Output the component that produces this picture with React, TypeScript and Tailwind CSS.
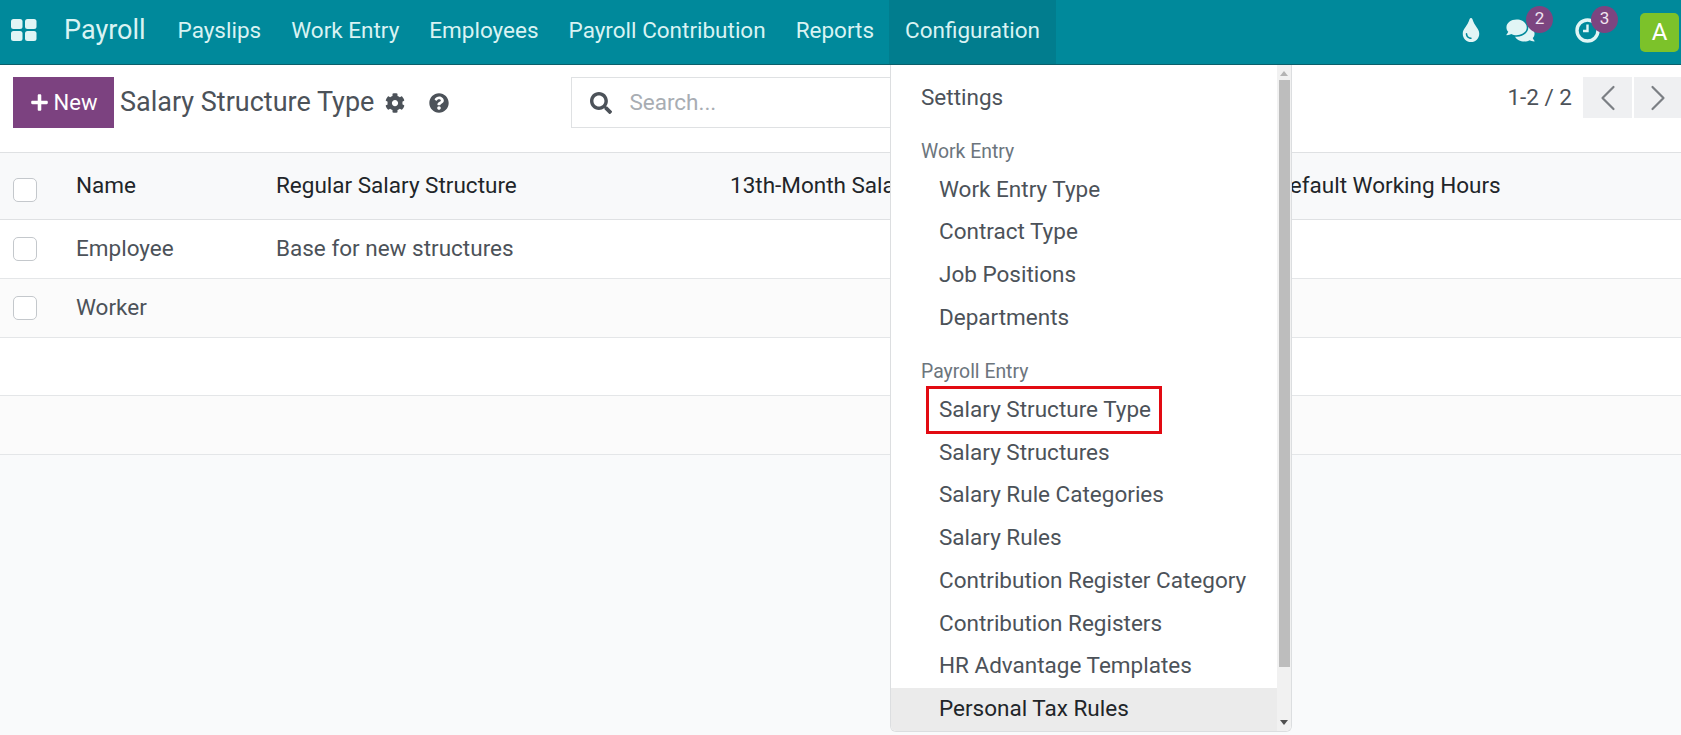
import { ChevronLeft, ChevronRight } from "lucide-react";
import { FaCog, FaComments, FaPlus, FaQuestionCircle, FaSearch, FaTint } from "react-icons/fa";

const navItems = ["Payslips", "Work Entry", "Employees", "Payroll Contribution", "Reports"];

const workEntryItems = ["Work Entry Type", "Contract Type", "Job Positions", "Departments"];

const payrollEntryItems = [
  "Salary Structure Type",
  "Salary Structures",
  "Salary Rule Categories",
  "Salary Rules",
  "Contribution Register Category",
  "Contribution Registers",
  "HR Advantage Templates",
  "Personal Tax Rules",
];

function Checkbox() {
  return <span className="block w-[24px] h-[24px] rounded-[5px] border border-[#c4c8cc] bg-white" />;
}

function Badge({ count }: { count: number }) {
  return (
    <span className="absolute -top-[12px] -right-[18px] w-[27px] h-[27px] rounded-full bg-[#7c4580] text-[#f2e6f2] text-[17px] flex items-center justify-center">
      {count}
    </span>
  );
}

function TableRow({ name, structure, shaded }: { name?: string; structure?: string; shaded?: boolean }) {
  return (
    <div className={`flex items-center h-[58.8px] border-b border-[#e4e6e8] text-[#4c5259] ${shaded ? "bg-[#fbfbfb]" : "bg-white"}`}>
      <div className="w-[76px] pl-[13px]">{name && <Checkbox />}</div>
      <div className="w-[200px]">{name}</div>
      <div>{structure}</div>
    </div>
  );
}

function MenuItem({ label, active, boxed }: { label: string; active?: boolean; boxed?: boolean }) {
  return (
    <div className={`relative h-[42.8px] flex items-center pl-[48px] ${active ? "bg-[#ebebeb] text-[#212529]" : "text-[#4c5259]"}`}>
      {label}
      {boxed && <span className="absolute left-[35px] -top-[2px] w-[236px] h-[48px] border-[3px] border-[#e20a12]" />}
    </div>
  );
}

function ConfigMenu() {
  return (
    <div className="absolute left-[890px] top-[65px] w-[402px] h-[667px] flex bg-white border border-t-0 border-[#dcdee0] rounded-b-[6px] overflow-hidden">
      <div className="flex-1 pt-[11px]">
        <div className="h-[43px] flex items-center pl-[30px] text-[#4c5259]">Settings</div>
        <div className="pt-[16px] h-[49px] flex items-center pl-[30px] text-[19.4px] text-[#6c757d]">Work Entry</div>
        {workEntryItems.map((item) => (
          <MenuItem key={item} label={item} />
        ))}
        <div className="pt-[16px] h-[49px] flex items-center pl-[30px] text-[19.4px] text-[#6c757d]">Payroll Entry</div>
        {payrollEntryItems.map((item) => (
          <MenuItem
            key={item}
            label={item}
            active={item === "Personal Tax Rules"}
            boxed={item === "Salary Structure Type"}
          />
        ))}
      </div>
      <div className="w-[14px] bg-[#f1f1f1] flex flex-col items-center justify-between">
        <div className="w-full flex flex-col items-center">
          <span className="mt-[6px] mb-[4px] w-0 h-0 border-x-[4px] border-x-transparent border-b-[5px] border-b-[#b4b4b4]" />
          <div className="w-[11px] h-[587px] bg-[#bdbdbd]" />
        </div>
        <span className="mb-[6px] w-0 h-0 border-x-[4px] border-x-transparent border-t-[5px] border-t-[#505050]" />
      </div>
    </div>
  );
}

export default function App() {
  return (
    <div className="relative w-[1681px] h-[735px] overflow-hidden bg-[#f9fafb] font-['Roboto',sans-serif] text-[22.5px]">
      <header className="flex items-center h-[65px] bg-[#00899b] border-b border-[#0b5f6b] text-[#d9f3f3]">
        <svg className="ml-[11px] mb-[5px] w-[26px] h-[22px]" viewBox="0 0 26 22" fill="#e1f5f5">
          <rect x="0" y="0" width="11.5" height="10" rx="2.5" />
          <rect x="14" y="0" width="11.5" height="10" rx="2.5" />
          <rect x="0" y="12" width="11.5" height="10" rx="2.5" />
          <rect x="14" y="12" width="11.5" height="10" rx="2.5" />
        </svg>
        <div className="ml-[27px] mr-[17px] pb-[3px] text-[27px]">Payroll</div>
        {navItems.map((item) => (
          <div key={item} className="px-[15px] pb-[2px] h-full flex items-center">
            {item}
          </div>
        ))}
        <div className="px-[16px] pb-[2px] h-full flex items-center bg-[#017d8e]">Configuration</div>
        <div className="ml-auto flex items-center">
          <div className="flex items-center mb-[4px]">
            <FaTint className="w-[18px] h-[24px] text-[#e1f5f5]" />
            <div className="relative ml-[26px]">
              <FaComments className="w-[29px] h-[25px] text-[#e1f5f5]" />
              <Badge count={2} />
            </div>
            <div className="relative ml-[40px]">
              <svg className="w-[25px] h-[25px] block" viewBox="0 0 25 25" fill="none" stroke="#e1f5f5" strokeWidth="3.4">
                <circle cx="12.5" cy="12.5" r="10.5" />
                <path d="M12.5 6.5v6.5H8" strokeWidth="2.4" />
              </svg>
              <Badge count={3} />
            </div>
          </div>
          <div className="ml-[40px] mr-[2px] w-[39px] h-[39px] rounded-[5px] bg-[#7cc22a] text-white text-[24px] flex items-center justify-center">
            A
          </div>
        </div>
      </header>

      <div className="flex items-start h-[88px] pt-[12px] bg-white border-b border-[#dfe1e3]">
        <button className="ml-[13px] w-[101px] h-[51px] bg-[#7c4280] text-white text-[22px] flex items-center justify-center gap-[5px]">
          <FaPlus className="w-[19px] h-[19px]" />
          New
        </button>
        <div className="ml-[6px] h-[51px] flex items-center text-[27px] text-[#4c5259]">Salary Structure Type</div>
        <FaCog className="ml-[11px] mt-[16px] w-[20px] h-[20px] text-[#4c5259]" />
        <FaQuestionCircle className="ml-[24px] mt-[16px] w-[20px] h-[20px] text-[#4c5259]" />
        <div className="ml-[122px] w-[640px] h-[51px] border border-[#dfe1e3] flex items-center pl-[18px]">
          <FaSearch className="w-[22px] h-[22px] text-[#4c5259]" />
          <span className="ml-[17px] text-[#a8adb3]">Search...</span>
        </div>
        <div className="ml-auto h-[41px] flex items-center text-[#4c5259]">1-2 / 2</div>
        <div className="ml-[11px] w-[49px] h-[41px] bg-[#eff0f2] flex items-center justify-center">
          <ChevronLeft className="w-[44px] h-[44px] text-[#7b7f84] shrink-0" strokeWidth={1.2} />
        </div>
        <div className="ml-[2px] w-[47px] h-[41px] bg-[#eff0f2] flex items-center justify-center">
          <ChevronRight className="w-[44px] h-[44px] text-[#7b7f84] shrink-0" strokeWidth={1.2} />
        </div>
      </div>

      <div className="flex items-center h-[67px] bg-[#f8f9fa] border-b border-[#dfe1e3] text-[#212529]">
        <div className="w-[76px] pl-[13px] pt-[7px]">
          <Checkbox />
        </div>
        <div className="w-[200px]">Name</div>
        <div className="w-[454px]">Regular Salary Structure</div>
        <div className="w-[545px]">13th-Month Salary Structure</div>
        <div>Default Working Hours</div>
      </div>
      <TableRow name="Employee" structure="Base for new structures" />
      <TableRow name="Worker" shaded />
      <TableRow />
      <TableRow shaded />

      <ConfigMenu />
    </div>
  );
}
